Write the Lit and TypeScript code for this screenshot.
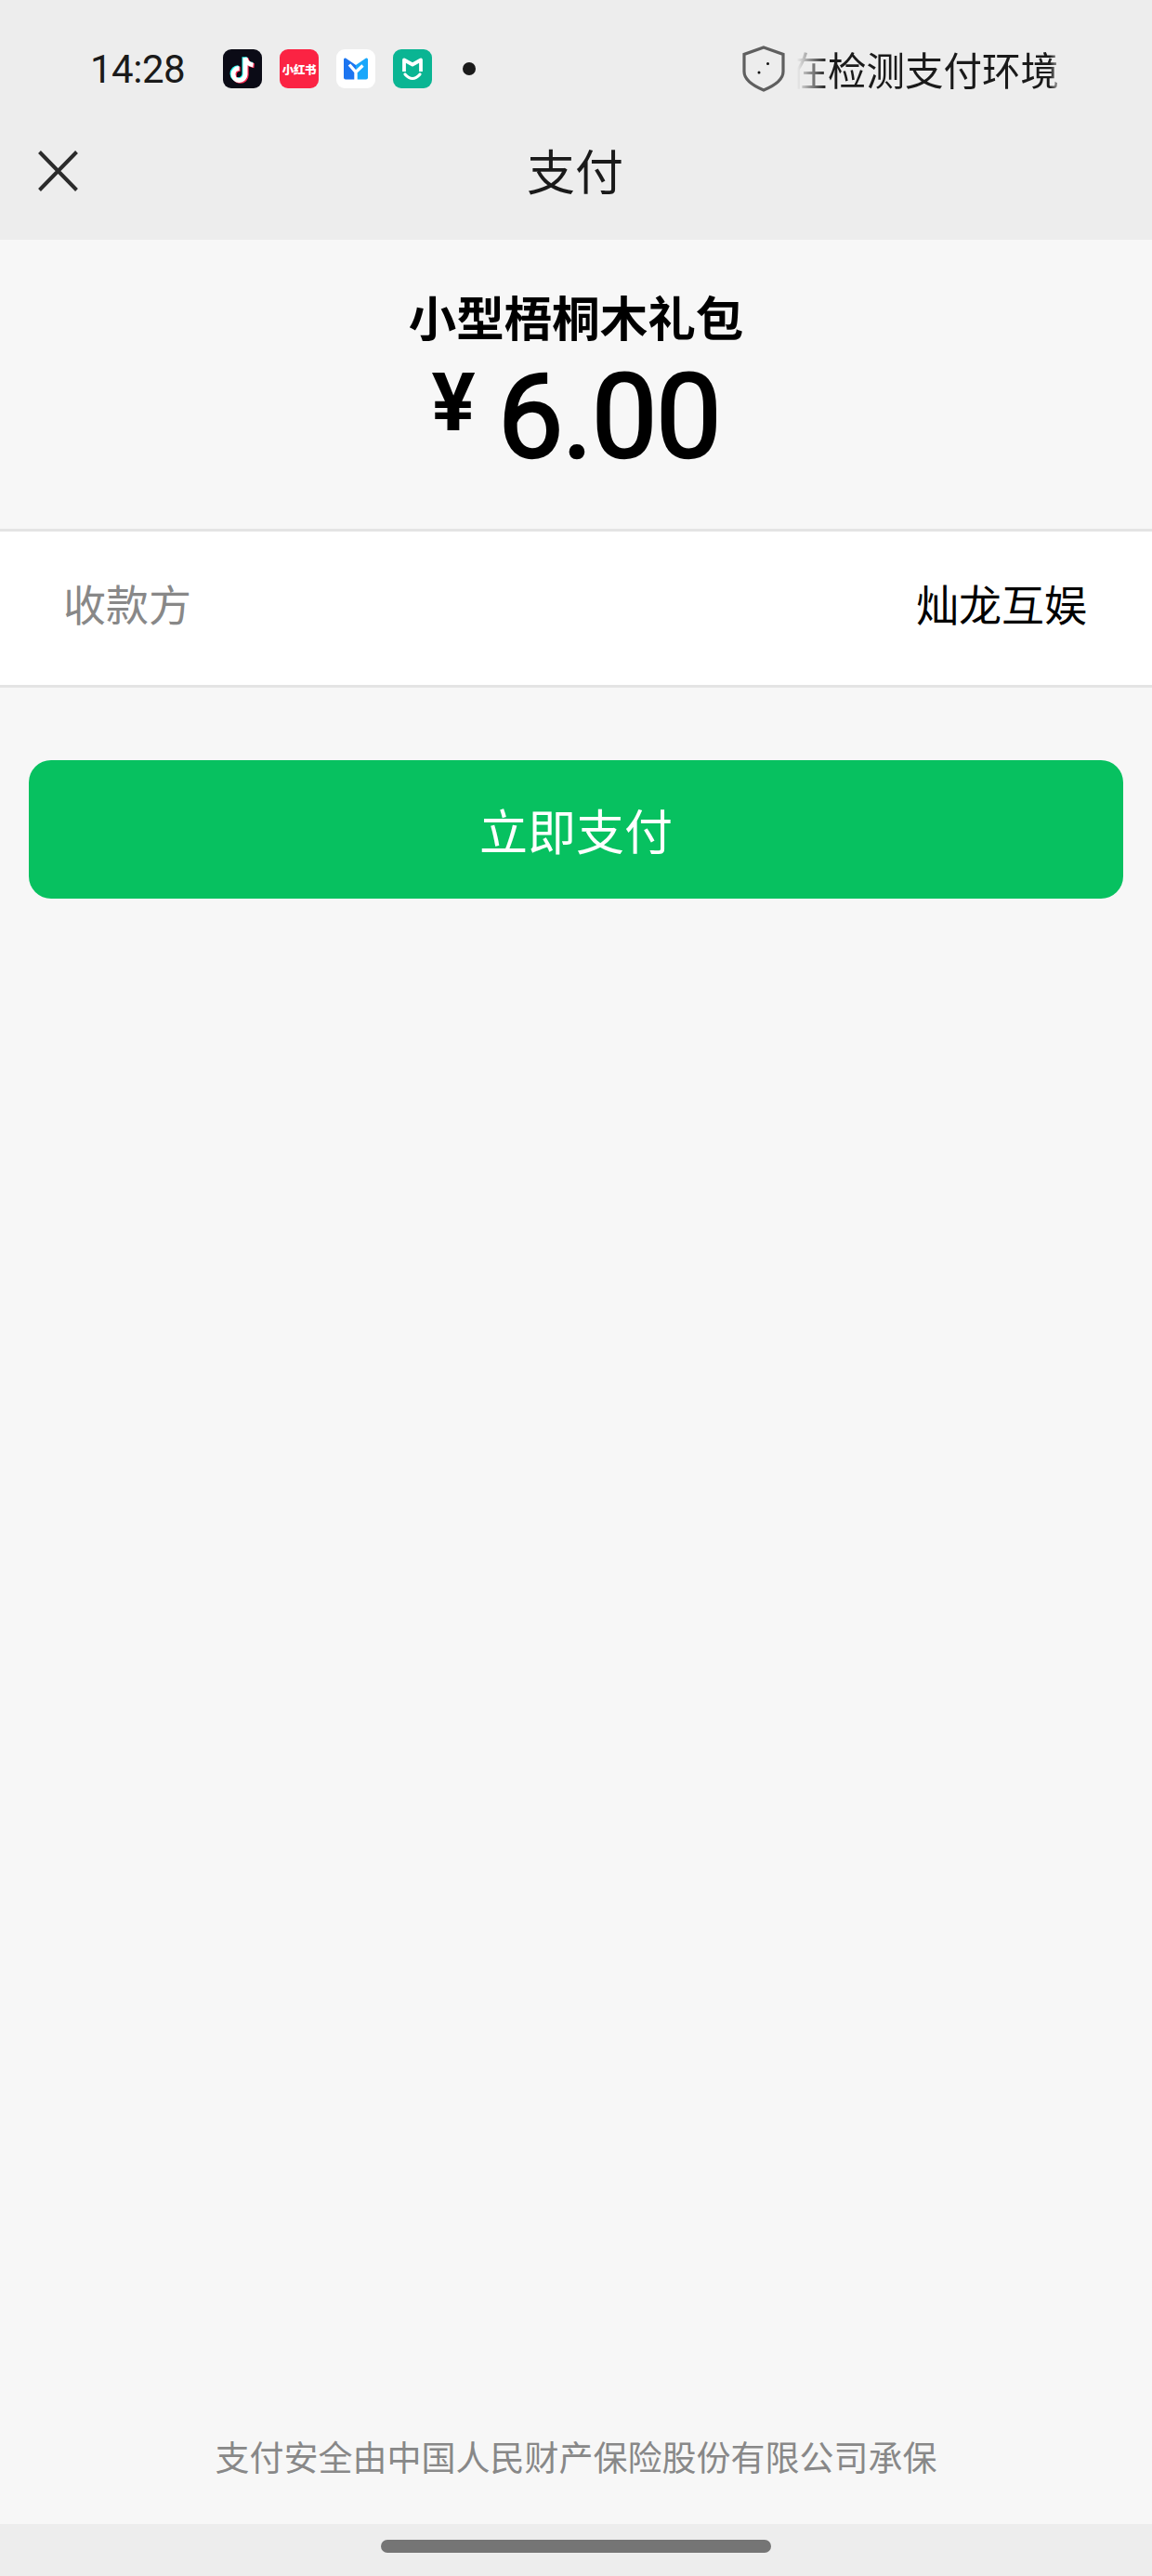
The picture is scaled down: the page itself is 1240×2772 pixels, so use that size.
import { LitElement, html, css } from "lit";
import { customElement } from "lit/decorators.js";

const CJK = css`"Noto Sans CJK SC", "Noto Sans", sans-serif`;

@customElement("app-root")
export class AppRoot extends LitElement {
  static styles = css`
    :host { display: block; font-family: ${CJK}; }
    .page { display: flex; flex-direction: column; min-height: 2772px; background: #f7f7f7; color: #000; }
    .header { background: #ededed; height: 258px; display: flex; flex-direction: column; flex: none; }
    .status { height: 148px; flex: none; display: flex; align-items: center; padding-left: 97px; padding-right: 100px; box-sizing: border-box; }
    .time { font-family: Roboto, sans-serif; font-size: 42px; color: #1a1a1a; width: 143px; flex: none; letter-spacing: -0.5px; }
    .apps { display: flex; gap: 19px; align-items: center; }
    .app { width: 42px; height: 42px; border-radius: 9px; overflow: hidden; display: flex; align-items: center; justify-content: center; flex: none; }
    .app svg { display: block; }
    .tiktok { background: #0b0b16; }
    .xhs { background: #fb2343; color: #fff; font-size: 12.5px; font-weight: 900; white-space: nowrap; letter-spacing: -0.4px; }
    .mboard { background: #fff; }
    .mihome { background: #0ab593; }
    .dot { width: 14px; height: 14px; border-radius: 50%; background: #1a1a1a; margin-left: 33px; }
    .secure { margin-left: auto; display: flex; align-items: center; }
    .shield { display: block; flex: none; }
    .marquee {
      width: 286px; margin-left: 9px; overflow: hidden; display: flex; justify-content: flex-end;
      font-size: 41.5px; line-height: 60px; color: #1a1a1a; white-space: nowrap;
      -webkit-mask-image: linear-gradient(to right, transparent 4px, #000 36px, #000 276px, transparent 290px);
      mask-image: linear-gradient(to right, transparent 4px, #000 36px, #000 276px, transparent 290px);
    }
    .nav { height: 70px; flex: none; display: flex; align-items: center; justify-content: center; position: relative; }
    .close { position: absolute; left: 41px; top: 14px; display: block; }
    .nav-title { font-size: 52px; line-height: 70px; color: #1a1a1a; margin-right: 2px; }
    .hero { height: 311px; flex: none; box-sizing: border-box; padding-top: 49px; display: flex; flex-direction: column; align-items: center; }
    .product { font-size: 51.5px; line-height: 66px; font-weight: 700; }
    .amount { display: flex; align-items: flex-start; font-family: Roboto, sans-serif; font-weight: 400; margin-top: 10px; }
    .yen { font-size: 88px; line-height: 100px; margin-right: 24px; font-weight: 700; }
    .num { font-size: 126px; line-height: 132px; letter-spacing: -1.500px; -webkit-text-stroke: 2.500px #000; }
    .row {
      height: 171px; flex: none; box-sizing: border-box; background: #fff;
      border-top: 3px solid #e4e4e4; border-bottom: 3px solid #e4e4e4;
      display: flex; align-items: center; justify-content: space-between; padding: 0 70px 13px 68px;
      font-size: 46px;
    }
    .label { color: #888888; }
    .value { color: #000; }
    .pay {
      margin: 78px 31px 0 31px; height: 149px; flex: none; border: 0; border-radius: 24px;
      background: #07c160; color: #fff; font: inherit; font-size: 52px; padding: 0;
    }
    .footer { margin-top: auto; text-align: center; font-size: 37px; line-height: 60px; color: #888888; padding-bottom: 43px; }
    .home { height: 56px; flex: none; background: #ededed; display: flex; justify-content: center; align-items: flex-start; padding-top: 17px; box-sizing: border-box; }
    .handle { width: 420px; height: 14px; border-radius: 7px; background: #757575; }
  `;

  render() {
    return html`
      <div class="page">
        <div class="header">
          <div class="status">
            <div class="time">14:28</div>
            <div class="apps">
              <div class="app tiktok">
                <svg width="42" height="42" viewBox="0 0 42 42" fill="none" stroke-width="5">
                  <g transform="translate(-1 -.8)"><path stroke="#25f4ee" d="M24 9v18a6.500 6.500 0 1 1-6.500-6.500M24 9c.5 4 4 7.500 8.500 8"/></g>
                  <g transform="translate(1.200 .8)"><path stroke="#fe2c55" d="M24 9v18a6.500 6.500 0 1 1-6.500-6.500M24 9c.5 4 4 7.500 8.500 8"/></g>
                  <path stroke="#fff" d="M24 9v18a6.500 6.500 0 1 1-6.500-6.500M24 9c.5 4 4 7.500 8.500 8"/>
                </svg>
              </div>
              <div class="app xhs">小红书</div>
              <div class="app mboard">
                <svg width="42" height="42" viewBox="0 0 42 42" fill="none">
                  <path fill="#1c75f0" d="M8 11q0-2 2-1.500L21 17v15.500H10q-2 0-2-2z"/>
                  <path fill="#18a7fb" d="M34 11q0-2-2-1.500L21 17v15.500H32q2 0 2-2z"/>
                  <path stroke="#fff" stroke-width="3.400" d="M14 16.500l7 8 7.500-7M21 24v9"/>
                </svg>
              </div>
              <div class="app mihome">
                <svg width="42" height="42" viewBox="0 0 42 42" fill="none" stroke="#fff">
                  <path stroke-width="3.800" stroke-linejoin="round" d="M12 24V11.500l9 5 9-5V24"/>
                  <path stroke-width="3.200" stroke-linecap="round" d="M13 27q8 9 16 0"/>
                </svg>
              </div>
            </div>
            <div class="dot"></div>
            <div class="secure">
              <svg class="shield" width="46" height="50" viewBox="0 0 46 50" fill="none">
                <path stroke="#5f5f5f" stroke-width="3.200" d="M23 2 44 9.500V28c0 8-9 15-21 20C11 43 2 36 2 28V9.500z"/>
                <circle cx="27.500" cy="19.500" r="1.500" fill="#111"/>
                <circle cx="18" cy="29" r="1.500" fill="#111"/>
              </svg>
              <div class="marquee"><span>正在检测支付环境</span></div>
            </div>
          </div>
          <div class="nav">
            <svg class="close" width="43" height="44" viewBox="0 0 43 44" fill="none" stroke="#2b2b2b" stroke-width="4"><path d="M1.500 1.500l40 41M41.500 1.500l-40 41"/></svg>
            <div class="nav-title">支付</div>
          </div>
        </div>
        <div class="hero">
          <div class="product">小型梧桐木礼包</div>
          <div class="amount"><span class="yen">¥</span><span class="num">6.00</span></div>
        </div>
        <div class="row"><span class="label">收款方</span><span class="value">灿龙互娱</span></div>
        <button class="pay">立即支付</button>
        <div class="footer">支付安全由中国人民财产保险股份有限公司承保</div>
        <div class="home"><div class="handle"></div></div>
      </div>
    `;
  }
}
